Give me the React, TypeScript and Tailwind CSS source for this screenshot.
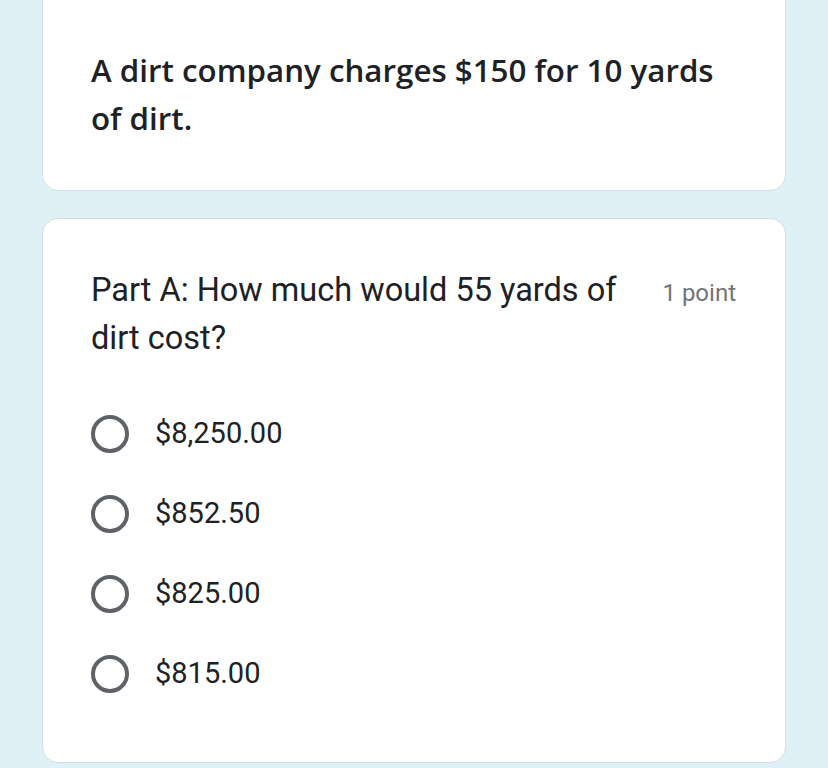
const options = ["$8,250.00", "$852.50", "$825.00", "$815.00"];

const Radio = () => (
  <span className="block w-[38px] h-[38px] rounded-full border-[4px] border-[#5f6368] shrink-0" />
);

export default function App() {
  return (
    <div className="min-h-screen bg-[#dff1f7] px-[42px] pb-10 overflow-hidden">
      <div className="-mt-[20px] bg-white rounded-2xl border border-[#d6dde0] pt-[65px] pb-[48px] px-[48px]">
        <p
          className="text-[31.3px] leading-[48px] font-semibold text-[#202124]"
          style={{ fontFamily: '"Open Sans", sans-serif' }}
        >
          A dirt company charges $150 for 10 yards
          <br />
          of dirt.
        </p>
      </div>

      <div
        className="mt-[27px] bg-white rounded-2xl border border-[#d6dde0] pt-[47px] pb-[48px] pl-[48px] pr-[49px]"
        style={{ fontFamily: "Roboto, sans-serif" }}
      >
        <div className="flex items-start justify-between">
          <p className="text-[32.5px] leading-[48px] text-[#202124]">
            Part A: How much would 55 yards of
            <br />
            dirt cost?
          </p>
          <span className="text-[24px] leading-[48px] text-[#70757a] pt-[3px]">
            1 point
          </span>
        </div>

        <div className="mt-[32px] flex flex-col">
          {options.map((o) => (
            <label key={o} className="h-[80px] flex items-center gap-[26px]">
              <Radio />
              <span className="text-[29px] text-[#202124]">{o}</span>
            </label>
          ))}
        </div>
      </div>
    </div>
  );
}
